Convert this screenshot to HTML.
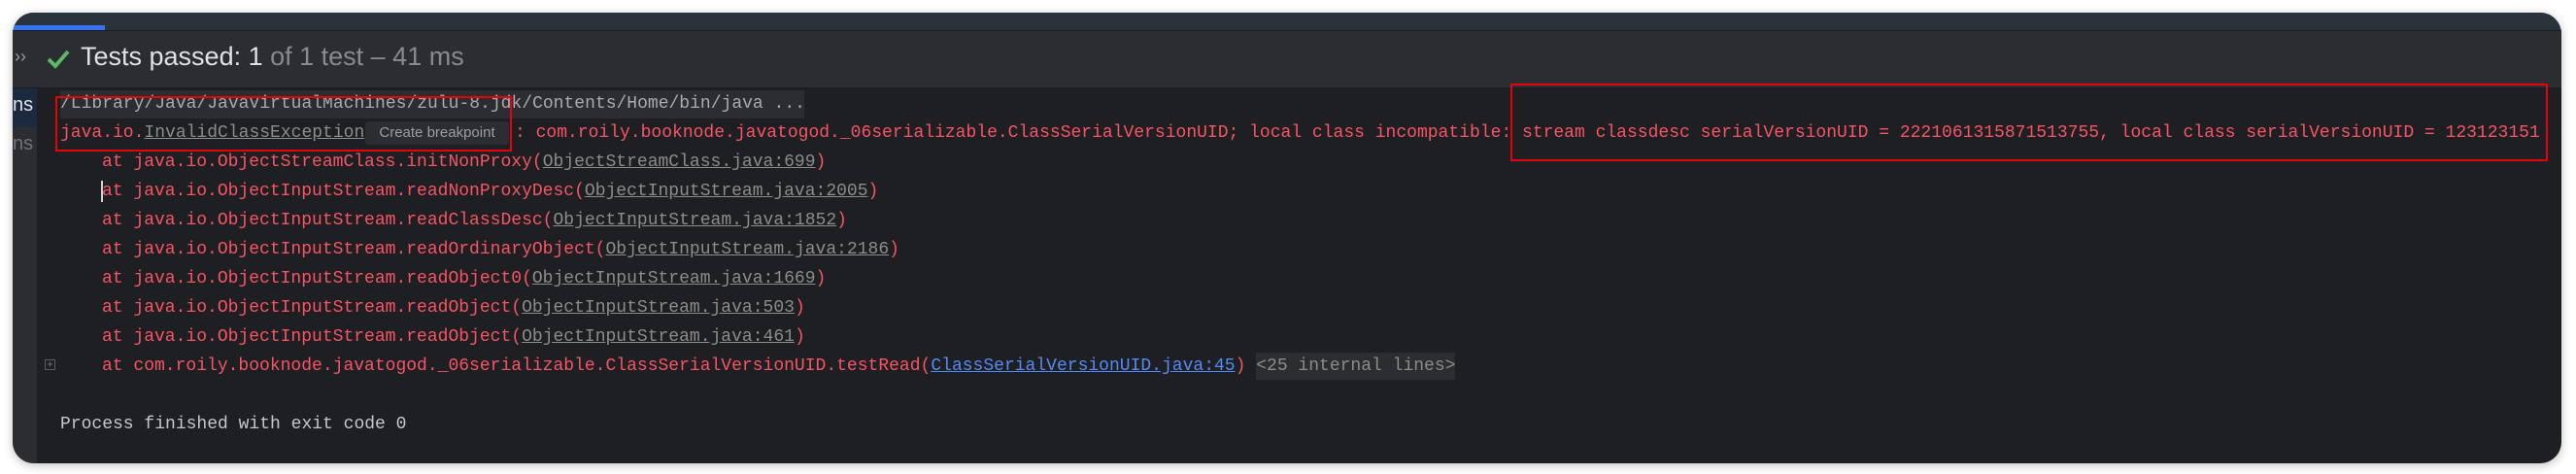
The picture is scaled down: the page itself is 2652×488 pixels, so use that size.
<!DOCTYPE html>
<html><head><meta charset="utf-8"><style>
html,body{margin:0;padding:0;background:#fff;width:2652px;height:488px;overflow:hidden}
.win{position:absolute;left:13px;top:13px;width:2624px;height:464px;background:#1e1f22;border-radius:22px;overflow:hidden;box-shadow:0 2px 10px rgba(0,0,0,.25)}
.strip{position:absolute;left:0;top:0;width:100%;height:18px;background:#2a323c;border-bottom:1px solid #1b1c1e}
.tab{position:absolute;left:0;top:13px;width:95px;height:5px;background:#3574f0}
.hdr{position:absolute;left:0;top:19px;width:100%;height:58px;background:#2b2d30;border-bottom:1px solid #1b1c1e}
.hdr .t{position:absolute;left:70px;top:11px;font:27px "Liberation Sans",sans-serif;color:#dfe1e5;white-space:pre}
.hdr .g{color:#868a91}
.gut{position:absolute;left:0;top:78px;width:25px;height:400px;background:#2b2d30}
.sel{position:absolute;left:0;top:78px;width:25px;height:40px;background:#1b2a3e}
.m{position:absolute;font:18px "Liberation Mono",monospace;white-space:pre;color:#f75464;line-height:30px}
.u{color:#8c8c8c;text-decoration:underline}
.b{color:#548af7;text-decoration:underline}
.box{position:absolute;border:2px solid #e8000b}
</style></head><body>
<div class="win">
<div class="strip"></div><div class="tab"></div>
<div class="hdr">
<div style="position:absolute;left:2px;top:16px;font:18px 'Liberation Sans',sans-serif;color:#9a9da3">››</div>
<svg style="position:absolute;left:34px;top:18px" width="26" height="22" viewBox="0 0 26 22"><path d="M3 11 L10 18 L23 3" fill="none" stroke="#5fb865" stroke-width="4"/></svg>
<div class="t">Tests passed: 1 <span class="g">of 1 test – 41 ms</span></div>
</div>
<div class="gut"></div><div class="sel"></div>
<div style="position:absolute;left:0;top:84px;font:20px 'Liberation Sans',sans-serif;color:#dfe1e5">ns</div>
<div style="position:absolute;left:0;top:124px;font:20px 'Liberation Sans',sans-serif;color:#6f737a">ns</div>
<div style="position:absolute;left:49px;top:80px;width:766px;height:29px;background:#2b2d30"></div>
<div class="m" style="left:49px;top:79px;color:#a9abb0">/Library/Java/JavaVirtualMachines/zulu-8.jdk/Contents/Home/bin/java ...</div>
<div class="m" style="left:49px;top:109px">java.io.<span class="u">InvalidClassException</span></div>
<div style="position:absolute;left:363px;top:112px;width:148px;height:24px;background:#2b2d30;border-radius:3px;font:15px 'Liberation Sans',sans-serif;color:#9a9da3;line-height:24px;text-align:center">Create breakpoint</div>
<div class="m" style="left:517px;top:109px">: com.roily.booknode.javatogod._06serializable.ClassSerialVersionUID; local class incompatible: stream classdesc serialVersionUID = 2221061315871513755, local class serialVersionUID = 123123151</div>
<div class="m" style="left:92px;top:139px">at java.io.ObjectStreamClass.initNonProxy(<span class="u">ObjectStreamClass.java:699</span>)
at java.io.ObjectInputStream.readNonProxyDesc(<span class="u">ObjectInputStream.java:2005</span>)
at java.io.ObjectInputStream.readClassDesc(<span class="u">ObjectInputStream.java:1852</span>)
at java.io.ObjectInputStream.readOrdinaryObject(<span class="u">ObjectInputStream.java:2186</span>)
at java.io.ObjectInputStream.readObject0(<span class="u">ObjectInputStream.java:1669</span>)
at java.io.ObjectInputStream.readObject(<span class="u">ObjectInputStream.java:503</span>)
at java.io.ObjectInputStream.readObject(<span class="u">ObjectInputStream.java:461</span>)
at com.roily.booknode.javatogod._06serializable.ClassSerialVersionUID.testRead(<span class="b">ClassSerialVersionUID.java:45</span>) <span style="color:#8c8c8c;background:#2b2d30;padding:4px 0">&lt;25 internal lines&gt;</span></div>
<div style="position:absolute;left:91px;top:173px;width:2px;height:22px;background:#cfd1d4"></div>
<div style="position:absolute;left:33px;top:357px;width:9px;height:9px;border:1px solid #5a5d63;color:#6f737a;font:10px monospace;line-height:9px;text-align:center">+</div>
<div class="m" style="left:49px;top:409px;color:#c5c7cc">Process finished with exit code 0</div>
<div class="box" style="left:44px;top:86px;width:466px;height:53px"></div>
<div class="box" style="left:1542px;top:73px;width:1064px;height:76px"></div>
</div>
</body></html>
